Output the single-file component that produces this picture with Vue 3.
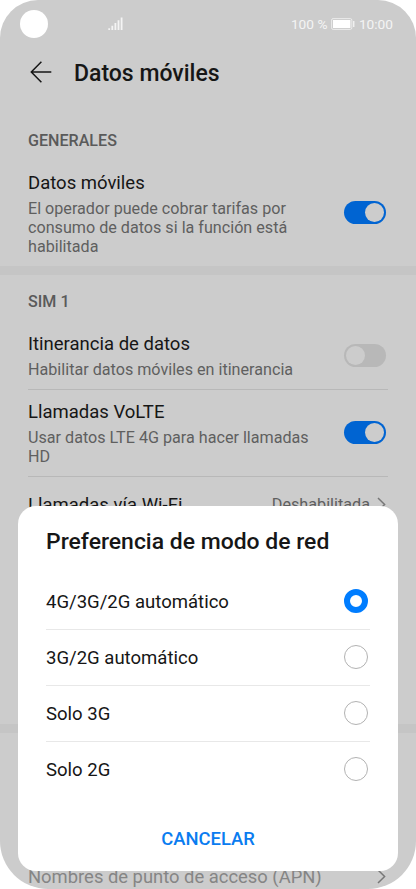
<script setup>
import { ref } from 'vue'

const options = ['4G/3G/2G automático', '3G/2G automático', 'Solo 3G', 'Solo 2G']
const selected = ref(0)
</script>

<template>
  <div class="phone">
    <header class="status">
      <span class="camera"></span>
      <svg class="signal" width="16" height="14" viewBox="0 0 16 14">
        <path d="M1.2 11.2V13M4.3 8.7V13M7.4 6V13M10.5 3.2V13M13.6 .5V13" stroke="#f4f4f4" stroke-width="1.8" />
      </svg>
      <span class="percent">100 %</span>
      <svg class="battery" width="24" height="12" viewBox="0 0 24 12">
        <rect x=".6" y=".6" width="20.2" height="10.8" rx="1.5" fill="none" stroke="#ececec" stroke-width="1" />
        <rect x="2" y="2" width="17.4" height="8" fill="#fff" />
        <path d="M22.7 3V9" stroke="#f0f0f0" stroke-width="1.5" />
      </svg>
      <span class="clock">10:00</span>
    </header>

    <div class="titlebar">
      <svg width="22" height="22" viewBox="0 0 22 22" fill="none" stroke="#161616" stroke-width="1.5">
        <path d="M11.4 .8L1.3 11L11.4 21.2M1.3 11H21.3" />
      </svg>
      <h1>Datos móviles</h1>
    </div>

    <h2 class="general">GENERALES</h2>
    <div class="row first">
      <div class="copy">
        <div class="label">Datos móviles</div>
        <p>El operador puede cobrar tarifas por<br />consumo de datos si la función está<br />habilitada</p>
      </div>
      <span class="switch on"></span>
    </div>
    <div class="band"></div>

    <h2 class="sim">SIM 1</h2>
    <div class="row roaming">
      <div class="copy">
        <div class="label">Itinerancia de datos</div>
        <p>Habilitar datos móviles en itinerancia</p>
      </div>
      <span class="switch"></span>
    </div>
    <div class="row volte">
      <div class="copy">
        <div class="label">Llamadas VoLTE</div>
        <p>Usar datos LTE 4G para hacer llamadas<br />HD</p>
      </div>
      <span class="switch on"></span>
    </div>
    <div class="row wifi">
      <div class="label">Llamadas vía Wi-Fi</div>
      <span class="value">Deshabilitada</span>
      <svg class="chevron" width="9" height="15" viewBox="0 0 9 15"><path d="M1 1L7.6 7.5L1 14" /></svg>
    </div>
    <div class="band lower"></div>
    <div class="row apn">
      <div class="label">Nombres de punto de acceso (APN)</div>
      <svg class="chevron" width="9" height="15" viewBox="0 0 9 15"><path d="M1 1L7.6 7.5L1 14" /></svg>
    </div>

    <section class="dialog">
      <h3>Preferencia de modo de red</h3>
      <div v-for="(option, i) in options" :key="option" class="option" @click="selected = i">
        <span class="name">{{ option }}</span>
        <span class="radio" :class="{ checked: selected === i }"></span>
      </div>
      <button @click="selected = 0">CANCELAR</button>
    </section>
  </div>
</template>

<style>
body {
  background: #fff;
}
</style>

<style scoped>
* {
  box-sizing: border-box;
}
.phone {
  position: relative;
  width: 416px;
  height: 889px;
  overflow: hidden;
  background: #ccc;
  border-radius: 38px 38px 48px 48px;
  font-family: Roboto, sans-serif;
  color: #161616;
  white-space: nowrap;
}
h1, h2, h3, p {
  margin: 0;
}
.status {
  display: flex;
  align-items: center;
  height: 48px;
  padding: 0 23px 0 20px;
  color: #f4f4f4;
  font-size: 13.7px;
}
.camera {
  width: 28px;
  height: 28px;
  border-radius: 50%;
  background: #fff;
}
.signal {
  margin-left: 60px;
}
.percent {
  margin-left: auto;
}
.battery {
  margin: 0 3.5px 0 4px;
}
.titlebar {
  display: flex;
  align-items: center;
  gap: 22px;
  height: 48px;
  padding-left: 30px;
}
h1 {
  padding-top: 2px;
  font-size: 23px;
  font-weight: 500;
}
h2 {
  padding-left: 28px;
  font-size: 16.1px;
  line-height: 20px;
  font-weight: 500;
  color: #5a5a5a;
}
.general {
  margin-top: 35px;
}
.sim {
  margin-top: 17px;
}
.row {
  display: flex;
  align-items: center;
  margin: 0 28px;
  padding-right: 2px;
}
.copy {
  flex: 1;
}
.label {
  font-size: 18.5px;
  line-height: 24px;
}
.row p {
  margin-top: 5px;
  font-size: 16.15px;
  line-height: 18.8px;
  color: #5f5f5f;
}
.first {
  height: 115px;
  align-items: flex-start;
  padding-top: 20px;
}
.first .switch {
  margin-top: 30px;
}
.band {
  height: 9px;
  background: #c5c5c5;
}
.roaming {
  height: 78px;
  align-items: flex-start;
  padding-top: 20px;
  border-bottom: 1px solid #b8b8b8;
}
.roaming .switch {
  margin-top: 12px;
}
.volte {
  height: 87px;
  align-items: flex-start;
  padding-top: 10px;
  border-bottom: 1px solid #b8b8b8;
}
.volte .switch {
  margin-top: 21px;
}
.switch {
  width: 42px;
  height: 23px;
  padding: 2px;
  border-radius: 12px;
  background: #b8b8b8;
}
.switch::before {
  content: '';
  display: block;
  width: 19px;
  height: 19px;
  border-radius: 50%;
  background: #ccc;
}
.switch.on {
  background: #0064d2;
}
.switch.on::before {
  margin-left: auto;
}
.wifi {
  height: 55px;
}
.value {
  margin-left: auto;
  margin-right: 7px;
  font-size: 16.2px;
  color: #5f5f5f;
}
.chevron {
  fill: none;
  stroke: #777;
  stroke-width: 1.5;
}
.lower {
  margin-top: 192px;
}
.apn {
  height: 56px;
  margin-top: 116px;
  justify-content: space-between;
  color: #858585;
}
.apn .label {
  font-size: 18.4px;
}
.apn .chevron {
  margin-top: -2px;
}
.dialog {
  position: absolute;
  left: 18px;
  top: 506px;
  width: 380px;
  height: 365px;
  padding: 20px 28px 0;
  display: flex;
  flex-direction: column;
  background: #fff;
  border-radius: 18px;
}
h3 {
  height: 48px;
  font-size: 22.95px;
  line-height: 31px;
  font-weight: 500;
}
.option {
  display: flex;
  align-items: center;
  justify-content: space-between;
  height: 56px;
  padding-right: 2px;
  border-bottom: 1px solid #e8e8e8;
  font-size: 18.55px;
}
.option:nth-of-type(4) {
  border-bottom-color: transparent;
}
.radio {
  width: 24px;
  height: 24px;
  margin-top: -1px;
  border: 1px solid #b2b2b2;
  border-radius: 50%;
}
.radio.checked {
  border: 6px solid #007dff;
}
button {
  align-self: center;
  margin-top: 26px;
  padding: 0;
  border: 0;
  background: none;
  color: #0a7cf0;
  font: 500 18.4px/30px Roboto, sans-serif;
}
</style>
